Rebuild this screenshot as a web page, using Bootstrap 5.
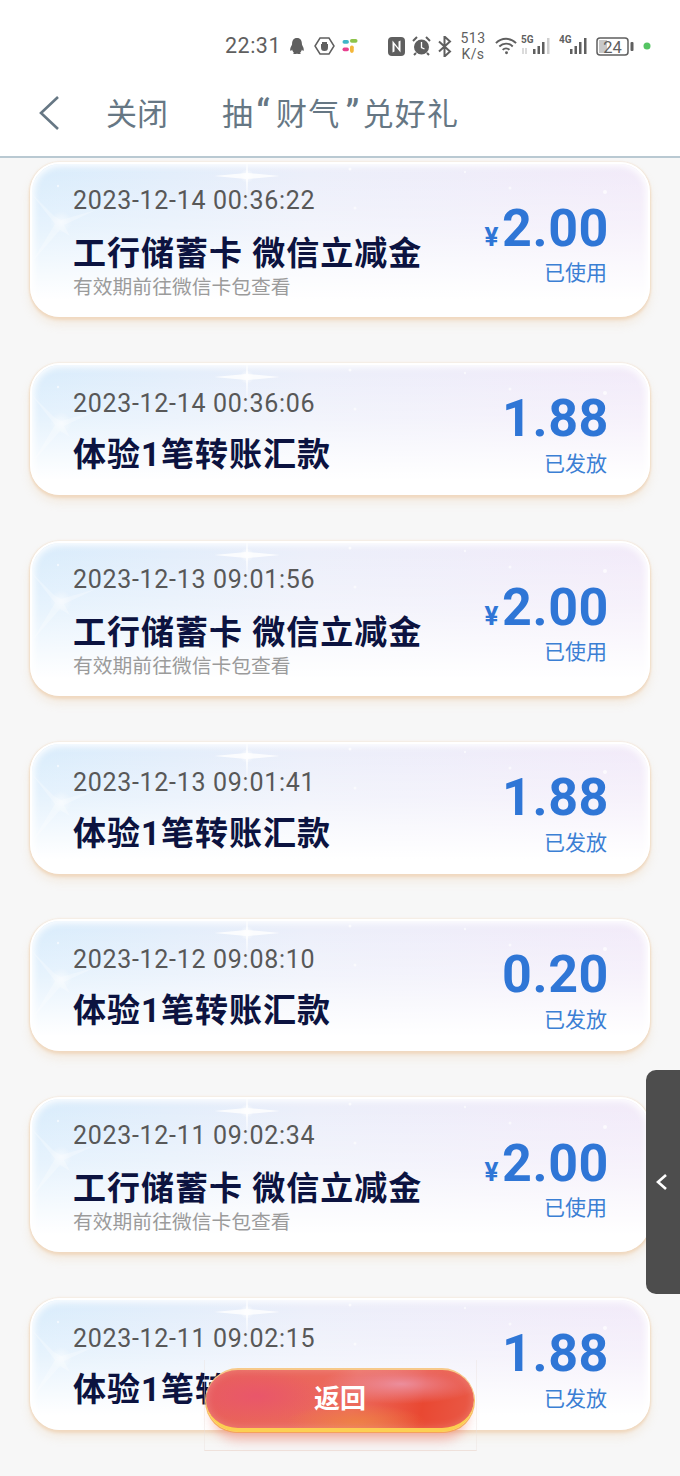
<!DOCTYPE html>
<html lang="zh-CN">
<head>
<meta charset="utf-8">
<title>抽“财气”兑好礼</title>
<link rel="stylesheet" href="https://cdn.jsdelivr.net/npm/bootstrap@5.3.0/dist/css/bootstrap.min.css">
<style>
html,body{height:100%}
body{width:680px;height:1476px;overflow:hidden;background:#f7f7f7;font-family:"Roboto","Noto Sans CJK SC",sans-serif;position:relative}
.sbar{height:80px;padding:12px 0 0 225px;color:#5f5f5f;background:#fff}
.sbar svg{display:block;flex:none}
.stime{font-size:21.500px;letter-spacing:.5px;line-height:1;width:55px;flex:none}
.snet{font-size:14px;line-height:16px;text-align:center;width:30px;letter-spacing:.4px;flex:none}
.tophead{height:78px;border-bottom:2px solid #b9c9d2;padding:0 0 10px 38px;color:#667784;font-size:31px;background:#fff}
.ttl{margin-top:4px}
.ttlwide{letter-spacing:1.200px}
.qt{font-size:36px;line-height:1;font-weight:500}
.qt1{margin:0 5px 0 2px}
.qt2{margin:0 2px 0 5px}
.tlist{padding:4px 30px 0;gap:46px}
.gift{height:132px;border-radius:30px;border:2px solid #fff;padding:0 41px;overflow:hidden;position:relative;
  background:linear-gradient(to bottom,rgba(255,255,255,0) 0,rgba(255,255,255,.36) 42%,#fff 90%),linear-gradient(to right,#d8ecfc 0,#ebeefa 45%,#f2eaf9 100%);
  box-shadow:inset 0 0 7px 2px #fff}
.giftwrap{border-radius:30px;box-shadow:0 3px 3px #f0d9c0,0 7px 10px rgba(235,205,170,.3),-1px 0 2px #f3e4d4,1px 0 2px #f3e4d4}
.giftwrap.tall .gift{height:155px}
.gapfix{margin-top:-1px}
.spark{position:absolute;left:-2px;top:-2px;width:620px;height:155px;pointer-events:none}
.lcol{padding-top:24px}
.rcol{padding-top:28px}
.tall .lcol{padding-top:22px}
.tall .rcol{padding-top:39px}
.tm{font-size:25px;color:#585858;line-height:30px;letter-spacing:.7px}
.nm{font-size:33px;font-weight:700;color:#0c1340;line-height:42px;letter-spacing:1px;margin-top:15px}
.tall .nm{margin-top:17px}
.sub{font-size:19.800px;color:#9b9b9b;line-height:22px;margin-top:2px}
.amt{color:#2f76d6;font-weight:700;font-size:52px;line-height:52px;letter-spacing:.6px;margin-right:-2px}
.yen{font-size:26px;margin-right:3px}
.st{color:#3b7fd4;font-size:21px;line-height:26px;margin-top:6px}
.tall .st{margin-top:-3px}
.sidehandle{position:absolute;left:646px;top:1070px;width:34px;height:224px;background:#4d4d4d;border-radius:10px 0 0 10px}
.sidehandle svg{position:absolute;left:9px;top:103px}
.backwrap{position:absolute;left:204px;top:1360px;width:273px;height:91px;border-bottom:1px solid #efe2dc;border-left:1px solid rgba(235,225,220,.4);border-right:1px solid rgba(235,225,220,.4)}
.backbtn{position:absolute;left:1px;top:8px;width:268px;height:64px;border-radius:32px;border:0;border-top:2px solid #f7c98a;border-bottom:4px solid #fccf52;color:#fff;font-size:26px;font-weight:700;padding:0;
 background:radial-gradient(ellipse 80px 20px at 195px 14px,rgba(236,148,166,.9) 0,rgba(236,148,166,0) 100%),radial-gradient(ellipse 70px 26px at 50px 26px,#e9566a 0,rgba(233,86,106,0) 100%),radial-gradient(ellipse 70px 18px at 150px 52px,#ee7f45 0,rgba(238,127,69,0) 100%),linear-gradient(100deg,#e8605a 0,#ec6a5c 55%,#e94832 80%,#e95a48 100%);
 box-shadow:0 14px 12px -6px rgba(238,100,80,.42),-1px 1px 0 #f9c765,1px 1px 0 #f9c765,inset 0 0 8px rgba(255,255,255,.22)}
</style>
</head>
<body>
<svg width="0" height="0" class="position-absolute">
<defs>
<radialGradient id="glow"><stop offset="0" stop-color="#fff" stop-opacity=".9"/><stop offset="1" stop-color="#fff" stop-opacity="0"/></radialGradient>
<radialGradient id="glowsoft"><stop offset="0" stop-color="#fff" stop-opacity=".55"/><stop offset="1" stop-color="#fff" stop-opacity="0"/></radialGradient>
<symbol id="sparks" viewBox="0 0 620 155">
<g fill="#fff">
<path d="M217 -8L218 11 250 14 218 17 217 42 216 17 184 14 216 11Z" opacity=".8"/>
<path d="M0 30L24 54 31 58 66 48 34 63 40 74 30 68 2 100 25 62Z" opacity=".28"/>
<circle cx="217" cy="14" r="7" fill="url(#glow)"/>
<circle cx="31" cy="60" r="11" fill="url(#glowsoft)"/>
<circle cx="320" cy="7" r="1.500" opacity=".7"/>
<circle cx="325" cy="46" r="1.500" opacity=".6"/>
<circle cx="480" cy="26" r="1.500" opacity=".6"/>
<circle cx="575" cy="30" r="2" opacity=".7"/>
<circle cx="28" cy="24" r="1.200" opacity=".6"/>
<circle cx="185" cy="86" r="1.500" opacity=".5"/>
<circle cx="435" cy="10" r="1.200" opacity=".6"/>
</g>
</symbol>
</defs>
</svg>

<div class="sbar d-flex align-items-center">
  <span class="stime">22:31</span>
  <svg style="margin-left:8px" width="18" height="20" viewBox="0 0 20 20" fill="#5f5f5f"><path d="M10 1c4 0 5.500 3 5.500 7 0 1 2.500 4 2 7-.5 1-1.500 0-2-1-.5 2-1.500 3-2 3.500 1 .5 1 1.500-1 1.500-1 0-2-.5-2.500-.5s-1.500.5-2.500.5c-2 0-2-1-1-1.500-.5-.5-1.500-1.500-2-3.500-.5 1-1.500 2-2 1-.5-3 2-6 2-7 0-4 1.500-7 5.500-7z"/></svg>
  <svg style="margin-left:8px" width="21" height="20" viewBox="0 0 21 20"><path d="M6 2h9l5 8-5 8H6l-5-8z" fill="none" stroke="#5f5f5f" stroke-width="1.500"/><path d="M7 8h1V6h5v2l1 0v3c0 3-1 4-3.500 4S7 14 7 11z" fill="#5f5f5f"/></svg>
  <svg style="margin-left:7px" width="16" height="15" viewBox="0 0 14 14"><rect x="0" y="1" width="6" height="3.500" rx="1.700" fill="#3fb6c9"/><rect x="7" y="0" width="7" height="3.500" rx="1.700" fill="#8dc34a"/><rect x="0" y="8" width="6" height="3.500" rx="1.700" fill="#e8408f"/><rect x="7" y="6" width="3.500" height="7" rx="1.700" fill="#f4b73a"/></svg>
  <svg style="margin-left:30px" width="17" height="19" viewBox="0 0 17 19"><rect x="0" y="0" width="17" height="19" rx="4" fill="#5f5f5f"/><path d="M4.500 3.500v12l2-1V8l6 7.500V3.500l-2 1V11z" fill="#fff"/></svg>
  <svg style="margin-left:7px" width="19" height="20" viewBox="0 0 19 20"><circle cx="9.500" cy="11" r="7.500" fill="#5f5f5f"/><path d="M9.500 6v5.500l3 1.500" stroke="#fff" stroke-width="1.300" fill="none"/><path d="M1 5l4-4M18 5l-4-4M4 17l-2 2M15 17l2 2" stroke="#5f5f5f" stroke-width="2"/></svg>
  <svg style="margin-left:7px" width="14" height="21" viewBox="0 0 14 21"><path d="M1 5.500l11 10-5.500 5V.5L12 5.500l-11 10" fill="none" stroke="#5f5f5f" stroke-width="2"/></svg>
  <div class="snet" style="margin-left:6px">513<br>K/s</div>
  <svg style="margin-left:7px" width="23" height="20" viewBox="0 0 24 20" fill="none" stroke="#5f5f5f" stroke-width="2"><path d="M1 7c6-6 15-6 21 0"/><path d="M4.500 10.500c4-4 10-4 14 0"/><path d="M8 14c2-2 5-2 7 0"/><circle cx="12" cy="17" r="1.500" fill="#5f5f5f" stroke="none"/></svg>
  <svg style="margin-left:3px" width="31" height="24" viewBox="0 0 31 24"><text x="0" y="9" font-size="10" font-weight="700" fill="#5f5f5f" font-family="Roboto">5G</text><g fill="#5f5f5f"><rect x="12" y="15" width="2.500" height="5"/><rect x="16.500" y="12" width="2.500" height="8"/><rect x="21" y="8" width="2.500" height="12"/></g><rect x="26" y="4" width="2.500" height="16" fill="#cfcfcf"/><path d="M2 14v6M5 14v6" stroke="#d0d0d0" stroke-width="1.500"/></svg>
  <svg style="margin-left:7px" width="30" height="24" viewBox="0 0 30 24"><text x="0" y="9" font-size="10" font-weight="700" fill="#5f5f5f" font-family="Roboto">4G</text><g fill="#5f5f5f"><rect x="11" y="15" width="2.500" height="5"/><rect x="15.500" y="12" width="2.500" height="8"/><rect x="20" y="8" width="2.500" height="12"/><rect x="25" y="4" width="2.500" height="16"/></g></svg>
  <svg style="margin-left:7px" width="38" height="19" viewBox="0 0 38 19"><rect x="1" y="1" width="31" height="17" rx="3" fill="none" stroke="#5f5f5f" stroke-width="1.500"/><rect x="3" y="3" width="8" height="13" fill="#c8c8c8"/><rect x="34.500" y="5" width="3" height="9" rx="1" fill="#5f5f5f"/><text x="16.500" y="15.500" text-anchor="middle" font-size="16.500" fill="#5f5f5f" font-family="Roboto">24</text></svg>
  <svg style="margin-left:9px" width="8" height="8" viewBox="0 0 8 8"><circle cx="4" cy="4" r="3.500" fill="#55c463"/></svg>
</div>

<div class="tophead d-flex align-items-center">
  <svg width="22" height="36" viewBox="0 0 22 36" fill="none" stroke="#667784" stroke-width="2.600"><path d="M20 2L3 18l17 16"/></svg>
  <span class="ttl" style="margin-left:46px">关闭</span>
  <span class="ttl ttlwide" style="margin-left:54px">抽<span class="qt qt1">“</span>财气<span class="qt qt2">”</span>兑好礼</span>
</div>

<div class="tlist d-flex flex-column">
  <div class="giftwrap tall"><div class="gift d-flex justify-content-between">
    <svg class="spark"><use href="#sparks"/></svg>
    <div class="lcol"><div class="tm">2023-12-14 00:36:22</div><div class="nm">工行储蓄卡 微信立减金</div><div class="sub">有效期前往微信卡包查看</div></div>
    <div class="rcol text-end"><div class="amt"><span class="yen">¥</span>2.00</div><div class="st">已使用</div></div>
  </div></div>
  <div class="giftwrap"><div class="gift d-flex justify-content-between">
    <svg class="spark"><use href="#sparks"/></svg>
    <div class="lcol"><div class="tm">2023-12-14 00:36:06</div><div class="nm">体验1笔转账汇款</div></div>
    <div class="rcol text-end"><div class="amt">1.88</div><div class="st">已发放</div></div>
  </div></div>
  <div class="giftwrap tall"><div class="gift d-flex justify-content-between">
    <svg class="spark"><use href="#sparks"/></svg>
    <div class="lcol"><div class="tm">2023-12-13 09:01:56</div><div class="nm">工行储蓄卡 微信立减金</div><div class="sub">有效期前往微信卡包查看</div></div>
    <div class="rcol text-end"><div class="amt"><span class="yen">¥</span>2.00</div><div class="st">已使用</div></div>
  </div></div>
  <div class="giftwrap"><div class="gift d-flex justify-content-between">
    <svg class="spark"><use href="#sparks"/></svg>
    <div class="lcol"><div class="tm">2023-12-13 09:01:41</div><div class="nm">体验1笔转账汇款</div></div>
    <div class="rcol text-end"><div class="amt">1.88</div><div class="st">已发放</div></div>
  </div></div>
  <div class="giftwrap gapfix"><div class="gift d-flex justify-content-between">
    <svg class="spark"><use href="#sparks"/></svg>
    <div class="lcol"><div class="tm">2023-12-12 09:08:10</div><div class="nm">体验1笔转账汇款</div></div>
    <div class="rcol text-end"><div class="amt">0.20</div><div class="st">已发放</div></div>
  </div></div>
  <div class="giftwrap tall"><div class="gift d-flex justify-content-between">
    <svg class="spark"><use href="#sparks"/></svg>
    <div class="lcol"><div class="tm">2023-12-11 09:02:34</div><div class="nm">工行储蓄卡 微信立减金</div><div class="sub">有效期前往微信卡包查看</div></div>
    <div class="rcol text-end"><div class="amt"><span class="yen">¥</span>2.00</div><div class="st">已使用</div></div>
  </div></div>
  <div class="giftwrap"><div class="gift d-flex justify-content-between">
    <svg class="spark"><use href="#sparks"/></svg>
    <div class="lcol"><div class="tm">2023-12-11 09:02:15</div><div class="nm">体验1笔转账汇款</div></div>
    <div class="rcol text-end"><div class="amt">1.88</div><div class="st">已发放</div></div>
  </div></div>
</div>

<div class="sidehandle"><svg width="14" height="18" viewBox="0 0 14 18" fill="none" stroke="#fff" stroke-width="2.600"><path d="M11 2L3 9l8 7"/></svg></div>
<div class="backwrap"><button type="button" class="backbtn btn">返回</button></div>

<script src="https://cdn.jsdelivr.net/npm/bootstrap@5.3.0/dist/js/bootstrap.bundle.min.js"></script>
</body>
</html>
